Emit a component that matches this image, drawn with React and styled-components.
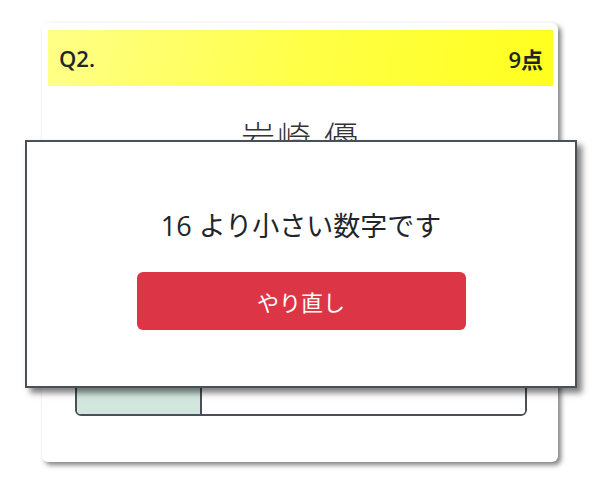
import React from "react";
import styled, { createGlobalStyle } from "styled-components";

const GlobalStyle = createGlobalStyle`
  html, body {
    margin: 0;
    padding: 0;
    background: #ffffff;
    font-family: "Open Sans", "Noto Sans CJK JP", sans-serif;
    color: #212529;
  }
`;

const Page = styled.div`
  position: relative;
  width: 600px;
  height: 480px;
  padding: 23px 42px 0 42px;
  box-sizing: border-box;
`;

const Card = styled.div`
  display: flex;
  flex-direction: column;
  height: 439px;
  padding: 7px 5px 0 6px;
  box-sizing: border-box;
  background: #fff;
  border-radius: 6px;
  box-shadow: 3px 3px 5px rgba(0, 0, 0, 0.5);
`;

const Header = styled.div`
  display: flex;
  align-items: center;
  justify-content: space-between;
  height: 56px;
  padding: 0 10px 0 11px;
  background: linear-gradient(100deg, #ffff88 0%, #ffff48 50%, #ffff1e 100%);
  font-size: 22px;
  font-weight: 600;
`;

const Name = styled.div`
  margin-top: 32px;
  text-align: center;
  font-size: 34px;
  font-weight: 300;
  letter-spacing: 2px;
  line-height: 40px;
  color: #333;
`;

const Bar = styled.div`
  display: flex;
  height: 44px;
  margin: auto 26px 46px 27px;
  border: 2px solid #495057;
  border-radius: 6px;
  overflow: hidden;
`;

const Segment = styled.div`
  width: ${(p) => p.$width};
  flex: ${(p) => (p.$width ? "none" : "1")};
  background: ${(p) => p.$bg};
  border-right: ${(p) => (p.$divider ? "2px solid #495057" : "none")};
`;

const Modal = styled.div`
  position: absolute;
  left: 25px;
  top: 140px;
  width: 552px;
  height: 248px;
  box-sizing: border-box;
  display: flex;
  flex-direction: column;
  align-items: center;
  padding-top: 66px;
  background: #fff;
  border: 2px solid #4a5059;
  box-shadow: 5px 5px 6px rgba(0, 0, 0, 0.5);
`;

const Message = styled.div`
  font-size: 27px;
  line-height: 36px;
  color: #212529;
`;

const RetryButton = styled.button`
  margin-top: 28px;
  width: 329px;
  height: 58px;
  border: none;
  border-radius: 6px;
  background: #dc3545;
  color: #fff;
  font-family: "Open Sans", "Noto Sans CJK JP", sans-serif;
  font-size: 22px;
  cursor: pointer;
`;

export default function App() {
  return (
    <>
      <GlobalStyle />
      <Page>
        <Card>
          <Header>
            <span>Q2.</span>
            <span>9点</span>
          </Header>
          <Name>岩崎 優</Name>
          <Bar>
            <Segment $width="123px" $bg="#d1e7dd" $divider />
            <Segment $bg="#fff" />
          </Bar>
        </Card>
        <Modal>
          <Message>16 より小さい数字です</Message>
          <RetryButton>やり直し</RetryButton>
        </Modal>
      </Page>
    </>
  );
}
